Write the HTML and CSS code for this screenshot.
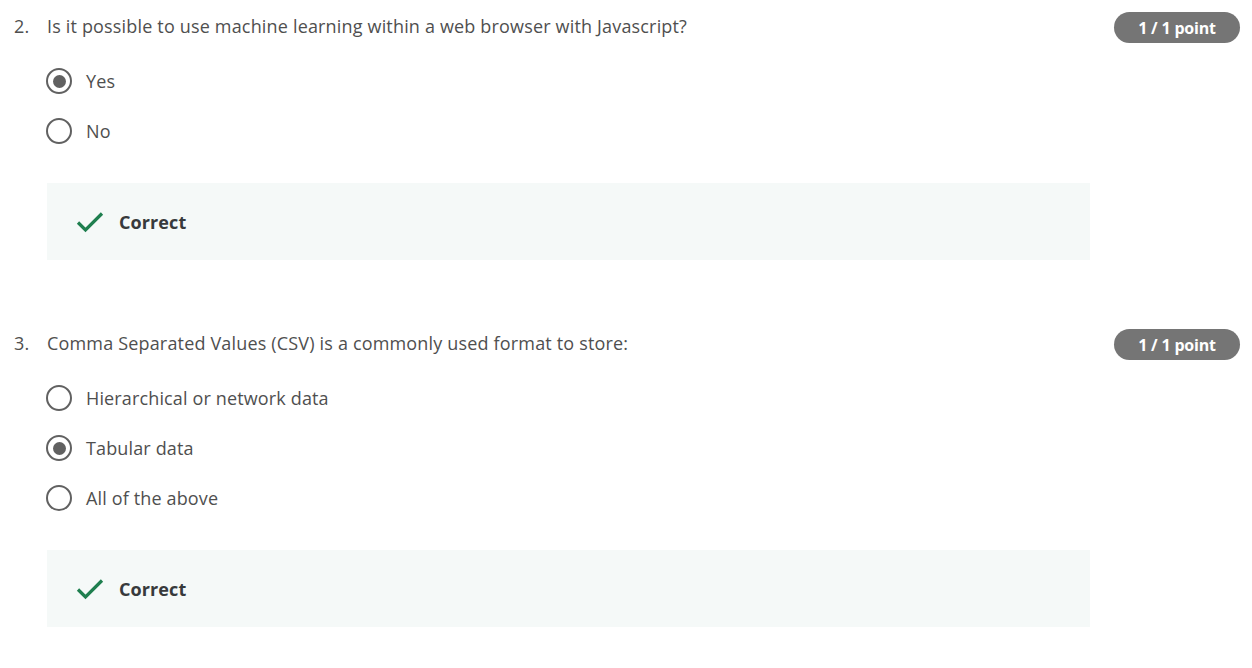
FILE: index.html
```html
<!DOCTYPE html>
<html>
<head>
<meta charset="utf-8">
<link rel="stylesheet" href="styles.css">
</head>
<body>
<div class="quiz">
  <section class="question q2">
    <div class="num">2.</div>
    <div class="body">
      <div class="prompt">Is it possible to use machine learning within a web browser with Javascript?</div>
      <div class="options">
        <div class="option"><span class="radio checked"></span><span class="label">Yes</span></div>
        <div class="option"><span class="radio"></span><span class="label">No</span></div>
      </div>
      <div class="feedback">
        <svg class="check" width="28" height="22" viewBox="0 0 28 22"><polyline points="2,11.5 9.5,19 26,2.5" fill="none" stroke="#1f7f4f" stroke-width="3.2"/></svg>
        <span class="fb-text">Correct</span>
      </div>
    </div>
    <div class="badge">1 / 1 point</div>
  </section>
  <section class="question q3">
    <div class="num">3.</div>
    <div class="body">
      <div class="prompt">Comma Separated Values (CSV) is a commonly used format to store:</div>
      <div class="options">
        <div class="option"><span class="radio"></span><span class="label">Hierarchical or network data</span></div>
        <div class="option"><span class="radio checked"></span><span class="label">Tabular data</span></div>
        <div class="option"><span class="radio"></span><span class="label">All of the above</span></div>
      </div>
      <div class="feedback">
        <svg class="check" width="28" height="22" viewBox="0 0 28 22"><polyline points="2,11.5 9.5,19 26,2.5" fill="none" stroke="#1f7f4f" stroke-width="3.2"/></svg>
        <span class="fb-text">Correct</span>
      </div>
    </div>
    <div class="badge">1 / 1 point</div>
  </section>
</div>
</body>
</html>
```
FILE: styles.css
```css
html, body {
  margin: 0;
  padding: 0;
  background: #fff;
}
body {
  font-family: "Open Sans", "Liberation Sans", sans-serif;
  color: #4f4f4f;
}
.quiz {
  padding-top: 12px;
}
.question {
  display: flex;
  align-items: flex-start;
  padding: 0 13px 0 14px;
}
.q3 {
  margin-top: 69px;
}
.num {
  width: 33px;
  font-size: 18px;
  line-height: 28px;
  letter-spacing: 0.15px;
}
.body {
  width: 1043px;
}
.prompt {
  font-size: 18px;
  line-height: 28px;
  letter-spacing: 0.17px;
}
.options {
  margin-top: 16px;
  display: flex;
  flex-direction: column;
}
.option {
  height: 50px;
  display: flex;
  align-items: center;
  margin-left: -1px;
}
.radio {
  box-sizing: border-box;
  width: 26px;
  height: 26px;
  border: 2.5px solid #616161;
  border-radius: 50%;
  display: flex;
  align-items: center;
  justify-content: center;
  flex: none;
}
.radio.checked::after {
  content: "";
  width: 13px;
  height: 13px;
  border-radius: 50%;
  background: #616161;
}
.label {
  margin-left: 14px;
  font-size: 18px;
  line-height: 26px;
  letter-spacing: 0.14px;
}
.feedback {
  margin-top: 27px;
  height: 77px;
  background: #f5f9f8;
  display: flex;
  align-items: center;
  padding-left: 29px;
}
.check {
  display: block;
}
.fb-text {
  margin-left: 15px;
  font-size: 18px;
  font-weight: 700;
  color: #373a3c;
  letter-spacing: 0.1px;
}
.badge {
  margin-left: auto;
  margin-right: -1px;
  width: 126px;
  height: 31px;
  border-radius: 16px;
  background: #757575;
  color: #fff;
  font-size: 16px;
  font-weight: 700;
  letter-spacing: -0.2px;
  display: flex;
  align-items: center;
  justify-content: center;
}
```
